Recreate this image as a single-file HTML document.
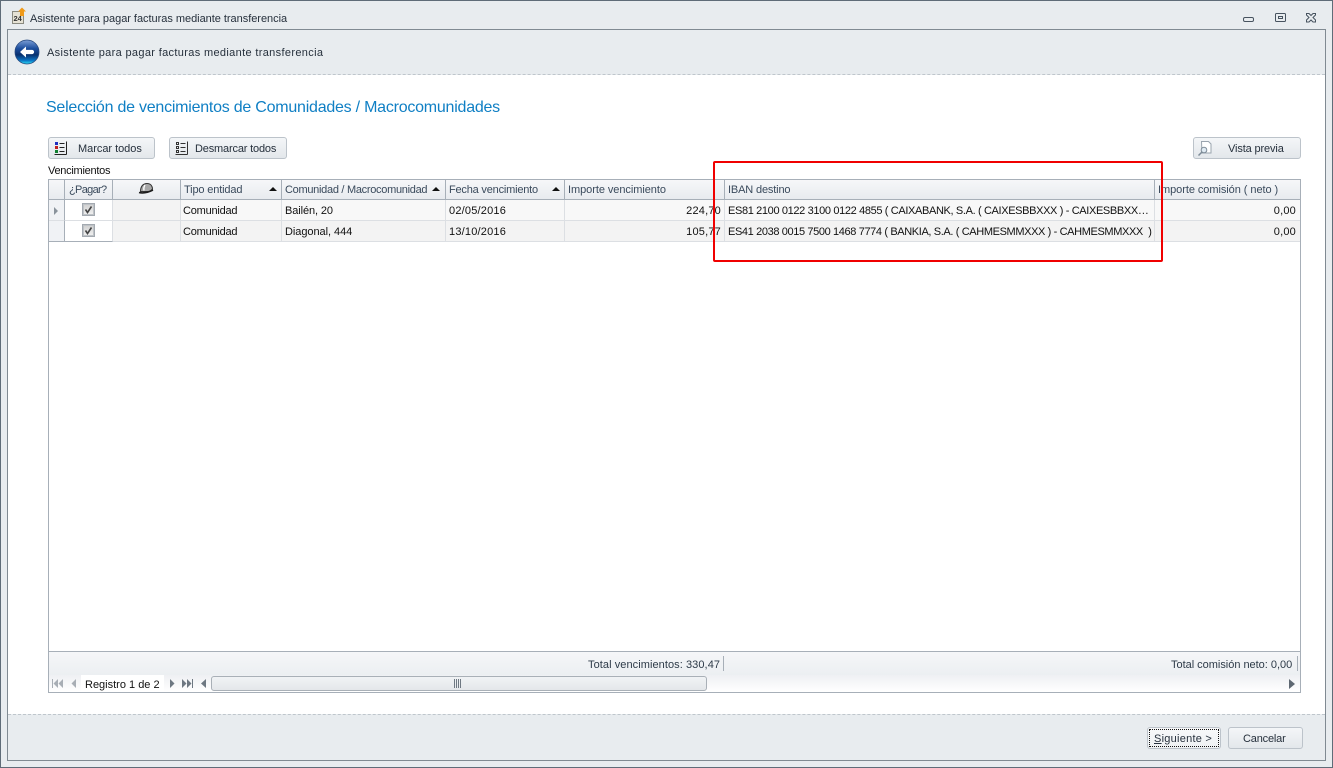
<!DOCTYPE html>
<html lang="es">
<head>
<meta charset="utf-8">
<title>Asistente para pagar facturas mediante transferencia</title>
<style>
html,body{margin:0;padding:0;background:#e8ecef;}
#w{position:relative;width:1333px;height:768px;overflow:hidden;background:#e8ecef;font-family:"Liberation Sans",sans-serif;font-size:11px;color:#1b2a3a;}
#w div,#w span.t{position:absolute;box-sizing:border-box;white-space:nowrap;}
.t{line-height:14px;}
.btn{border:1px solid #bcc3ca;border-radius:3px;background:linear-gradient(#f4f6f8,#e3e7eb);}
.h{top:180px;height:19px;background:linear-gradient(#f6f7f9,#e8ebef);border-right:1px solid #a7afb8;}
.ht{top:183px;color:#3a4a5c;}
.c{height:21px;border-right:1px solid #dcdfe3;border-bottom:1px solid #dcdfe3;background:#f3f3f3;}
.ct{color:#111;}
.r{text-align:right;}
.arr{width:0;height:0;border-left:4px solid transparent;border-right:4px solid transparent;border-bottom:4px solid #111;top:187px;}
.cb{width:13px;height:13px;border:1px solid #a3a9b0;box-shadow:inset 0 0 0 1px #bfc3c7;background:linear-gradient(#cfcfcf,#f2f2f2);}
</style>
</head>
<body>
<div id="w">
  <!-- outer frame -->
  <div style="left:0;top:0;width:1333px;height:768px;border:1px solid #5f6c78;"></div>
  <svg style="position:absolute;left:11px;top:7px" width="16" height="18" viewBox="0 0 16 18">
    <rect x="1.500" y="4.500" width="11" height="12" fill="#e6e2d4" stroke="#8a8a80"/>
    <text x="2.500" y="14" font-family="Liberation Sans" font-size="7.500" font-weight="bold" fill="#333">24</text>
    <path d="M9 9V4.500H7L11 .5l4 4h-2V9z" fill="#f09a18"/>
  </svg>
  <span class="t" style="left:30px;top:12px;letter-spacing:-.03px;color:#26303c">Asistente para pagar facturas mediante transferencia</span>

  <!-- window buttons -->
  <svg style="position:absolute;left:1240px;top:10px" width="80" height="16" viewBox="0 0 80 16" fill="none" stroke="#47535f">
    <rect x="3.500" y="7.500" width="10" height="4" rx="1.500"/>
    <rect x="35.500" y="3.500" width="10" height="8" rx="1"/>
    <rect x="38.500" y="6.500" width="4" height="2"/>
    <path d="M66.500 3.500h2.500l2 2 2-2h2.500v1.500l-2.500 2.500 2.500 2.500v2h-2.500l-2-2-2 2h-2.500v-2l2.500-2.500-2.500-2.500z"/>
  </svg>

  <!-- inner panel -->
  <div style="left:7px;top:29px;width:1319px;height:732px;border:1px solid #808a92;background:#e8ecef;"></div>
  <div style="left:8px;top:75px;width:1317px;height:639px;background:#fff;"></div>
  <div style="left:8px;top:74px;width:1317px;height:0;border-top:1px dashed #bfc6cc;"></div>
  <div style="left:8px;top:714px;width:1317px;height:0;border-top:1px dashed #bfc6cc;"></div>

  <!-- back icon -->
  <svg style="position:absolute;left:14px;top:39px" width="26" height="26" viewBox="0 0 26 26">
    <defs>
      <linearGradient id="bg" x1="0" y1="0" x2="0" y2="1">
        <stop offset="0" stop-color="#7c9fd6"/><stop offset=".35" stop-color="#1d4f9e"/><stop offset=".62" stop-color="#08306f"/><stop offset=".85" stop-color="#0a74c4"/><stop offset="1" stop-color="#2fe0f4"/>
      </linearGradient>
    </defs>
    <circle cx="13" cy="13" r="12" fill="url(#bg)" stroke="#27487e" stroke-width=".8"/>
    <path d="M6 13l6-5.500v3.400h6a2.100 2.100 0 0 1 0 4.200h-6v3.400z" fill="#fff"/>
  </svg>
  <span class="t" style="left:47px;top:46px;letter-spacing:.34px;color:#26303c">Asistente para pagar facturas mediante transferencia</span>

  <span class="t" style="left:46px;top:98px;font-size:16px;line-height:20px;color:#0f7fc4;letter-spacing:-.235px">Selección de vencimientos de Comunidades / Macrocomunidades</span>

  <!-- top buttons -->
  <div class="btn" style="left:48px;top:137px;width:107px;height:22px;"></div>
  <svg style="position:absolute;left:54px;top:141px" width="14" height="14" viewBox="0 0 14 14">
    <rect x="1" y="1" width="3" height="3" fill="#2030c0"/><rect x="1" y="5" width="3" height="3" fill="#c02020"/><rect x="1" y="9" width="3" height="3" fill="#108030"/>
    <path d="M5.500 2.500h5M5.500 6.500h5M5.500 10.500h5M12.500 .5v13M.5 13.500h12" stroke="#222" fill="none"/>
  </svg>
  <span class="t" style="left:78px;top:142px;letter-spacing:-.03px;color:#26303c">Marcar todos</span>

  <div class="btn" style="left:169px;top:137px;width:118px;height:22px;"></div>
  <svg style="position:absolute;left:175px;top:141px" width="14" height="14" viewBox="0 0 14 14" fill="none" stroke="#333">
    <rect x="1.500" y="1.500" width="2" height="2"/><rect x="1.500" y="5.500" width="2" height="2"/><rect x="1.500" y="9.500" width="2" height="2"/>
    <path d="M5.500 2.500h5M5.500 6.500h5M5.500 10.500h5M12.500 .5v13M.5 13.500h12"/>
  </svg>
  <span class="t" style="left:195px;top:142px;letter-spacing:-.17px;color:#26303c">Desmarcar todos</span>

  <div class="btn" style="left:1193px;top:137px;width:108px;height:22px;"></div>
  <svg style="position:absolute;left:1197px;top:140px" width="16" height="17" viewBox="0 0 16 17" fill="none">
    <path d="M4.500 1.500h7l2.500 2.500v9h-9z" fill="#fff" stroke="#9aa4ae"/>
    <circle cx="7" cy="10" r="2.800" fill="#dfeaf2" stroke="#7e8c98"/>
    <path d="M5 12l-3.500 3.500" stroke="#7e8c98" stroke-width="1.500"/>
  </svg>
  <span class="t" style="left:1228px;top:142px;letter-spacing:-.13px;color:#26303c">Vista previa</span>

  <span class="t" style="left:48px;top:164px;color:#111;letter-spacing:-.27px">Vencimientos</span>

  <!-- grid -->
  <div style="left:48px;top:179px;width:1253px;height:514px;border:1px solid #a7afb8;background:#fff;"></div>
  <div style="left:49px;top:199px;width:1251px;height:1px;background:#a7afb8;"></div>

  <div class="h" style="left:49px;width:16px;"></div>
  <div class="h" style="left:65px;width:48px;"></div>
  <div class="h" style="left:113px;width:68px;"></div>
  <div class="h" style="left:181px;width:101px;"></div>
  <div class="h" style="left:282px;width:164px;"></div>
  <div class="h" style="left:446px;width:119px;"></div>
  <div class="h" style="left:565px;width:160px;"></div>
  <div class="h" style="left:725px;width:430px;"></div>
  <div class="h" style="left:1155px;width:145px;border-right:0;"></div>

  <span class="t ht" style="left:69px;letter-spacing:-.67px">¿Pagar?</span>
  <svg style="position:absolute;left:138px;top:182px" width="16" height="13" viewBox="0 0 16 13">
    <path d="M2.500 9.500C2.500 4.500 5 1.500 9 1.500s5.500 3 5.500 5.500l-2.500 2.500z" fill="#a8a8a8" stroke="#333"/>
    <path d="M1 10.500C5 11.500 10 10.500 15 8" fill="none" stroke="#1c1c1c" stroke-width="1.600"/>
    <path d="M7 3C6 4.500 5.500 6 6 8.500" fill="none" stroke="#fff" stroke-width="1.400"/>
  </svg>
  <span class="t ht" style="left:184px;letter-spacing:-.15px">Tipo entidad</span>
  <div class="arr" style="left:269px"></div>
  <span class="t ht" style="left:285px;letter-spacing:-.29px">Comunidad / Macrocomunidad</span>
  <div class="arr" style="left:432px"></div>
  <span class="t ht" style="left:449px;letter-spacing:-.2px">Fecha vencimiento</span>
  <div class="arr" style="left:552px"></div>
  <span class="t ht" style="left:568px;letter-spacing:-.06px">Importe vencimiento</span>
  <span class="t ht" style="left:728px;letter-spacing:-.15px">IBAN destino</span>
  <span class="t ht" style="left:1158px;letter-spacing:-.06px">Importe comisión ( neto )</span>

  <!-- row cells -->
  <div class="c" style="left:49px;top:200px;width:16px;background:#f0f2f5;border-right-color:#a7afb8;"></div>
  <div class="c" style="left:49px;top:221px;width:16px;background:#f0f2f5;border-right-color:#a7afb8;border-bottom-color:#a7afb8;"></div>
  <div style="left:54px;top:207px;width:0;height:0;border-left:4px solid #8a939c;border-top:4px solid transparent;border-bottom:4px solid transparent;"></div>

  <div class="c" style="left:65px;top:200px;width:48px;background:#fff;"></div>
  <div class="c" style="left:65px;top:221px;width:48px;background:#fff;border-bottom-color:#a7afb8;"></div>
  <div class="c" style="left:113px;top:200px;width:68px;"></div>
  <div class="c" style="left:113px;top:221px;width:68px;"></div>
  <div class="c" style="left:181px;top:200px;width:101px;background:#f8f8f8;"></div>
  <div class="c" style="left:181px;top:221px;width:101px;"></div>
  <div class="c" style="left:282px;top:200px;width:164px;background:#f8f8f8;"></div>
  <div class="c" style="left:282px;top:221px;width:164px;"></div>
  <div class="c" style="left:446px;top:200px;width:119px;background:#f8f8f8;"></div>
  <div class="c" style="left:446px;top:221px;width:119px;"></div>
  <div class="c" style="left:565px;top:200px;width:160px;background:#f8f8f8;"></div>
  <div class="c" style="left:565px;top:221px;width:160px;"></div>
  <div class="c" style="left:725px;top:200px;width:430px;background:#f8f8f8;"></div>
  <div class="c" style="left:725px;top:221px;width:430px;"></div>
  <div class="c" style="left:1155px;top:200px;width:145px;background:#f8f8f8;border-right:0;"></div>
  <div class="c" style="left:1155px;top:221px;width:145px;border-right:0;"></div>

  <div class="cb" style="left:82px;top:203px;"></div>
  <div class="cb" style="left:82px;top:224px;"></div>
  <svg style="position:absolute;left:82px;top:203px" width="13" height="34" viewBox="0 0 13 34" fill="none" stroke="#444" stroke-width="1.600">
    <path d="M3.500 6.500l2 3 4-6M3.500 27.500l2 3 4-6"/>
  </svg>

  <span class="t ct" style="left:183px;top:204px;letter-spacing:-.22px">Comunidad</span>
  <span class="t ct" style="left:183px;top:225px;letter-spacing:-.22px">Comunidad</span>
  <span class="t ct" style="left:285px;top:204px;letter-spacing:-.1px">Bailén, 20</span>
  <span class="t ct" style="left:285px;top:225px;letter-spacing:-.05px">Diagonal, 444</span>
  <span class="t ct" style="left:449px;top:204px;letter-spacing:.2px">02/05/2016</span>
  <span class="t ct" style="left:449px;top:225px;letter-spacing:.2px">13/10/2016</span>
  <span class="t ct r" style="left:621px;width:100px;top:204px;letter-spacing:.2px">224,70</span>
  <span class="t ct r" style="left:621px;width:100px;top:225px;letter-spacing:.2px">105,77</span>
  <span class="t ct" style="left:728px;top:204px;letter-spacing:-.36px">ES81 2100 0122 3100 0122 4855 ( CAIXABANK, S.A. ( CAIXESBBXXX ) - CAIXESBBXX…</span>
  <span class="t ct" style="left:728px;top:225px;letter-spacing:-.375px">ES41 2038 0015 7500 1468 7774 ( BANKIA, S.A. ( CAHMESMMXXX ) - CAHMESMMXXX &nbsp;)</span>
  <span class="t ct r" style="left:1196px;width:100px;top:204px;letter-spacing:.2px">0,00</span>
  <span class="t ct r" style="left:1196px;width:100px;top:225px;letter-spacing:.2px">0,00</span>

  <!-- footer -->
  <div style="left:49px;top:651px;width:1251px;height:1px;background:#a7afb8;"></div>
  <div style="left:49px;top:652px;width:1251px;height:23px;background:linear-gradient(#f5f6f8,#eceff2);"></div>
  <div style="left:49px;top:675px;width:1251px;height:17px;background:linear-gradient(#eef0f3,#fff);"></div>
  <span class="t" style="left:588px;top:658px;color:#2d3a48;letter-spacing:.07px">Total vencimientos: 330,47</span>
  <div style="left:723px;top:656px;width:1px;height:15px;background:#a7afb8;"></div>
  <span class="t" style="left:1171px;top:658px;color:#2d3a48;letter-spacing:-.02px">Total comisión neto: 0,00</span>
  <div style="left:1297px;top:656px;width:1px;height:15px;background:#a7afb8;"></div>

  <div style="left:81px;top:675px;width:83px;height:17px;background:#fff;"></div>
  <span class="t" style="left:85px;top:678px;color:#111;">Registro 1 de 2</span>
  <svg style="position:absolute;left:50px;top:678px" width="160" height="12" viewBox="0 0 160 12">
    <g fill="#a8aeb5">
      <path d="M2 1h1v9H2zM8 1v9L3.500 5.500zM13 1v9L8.500 5.500z"/>
      <path d="M26 1v9l-4.500-4.500z"/>
    </g>
    <g fill="#6e7882">
      <path d="M120 1v9l4.500-4.500z"/>
      <path d="M132 1v9l4.500-4.500zM137 1v9l4.500-4.500zM142 1h1v9h-1z"/>
      <path d="M156 1v9l-5-4.500z"/>
    </g>
  </svg>
  <div style="left:211px;top:676px;width:496px;height:15px;border:1px solid #a9b0b7;border-radius:3px;background:linear-gradient(#f1f3f5,#e4e7ea);"></div>
  <svg style="position:absolute;left:454px;top:679px" width="10" height="9" viewBox="0 0 10 9" stroke="#6e7882" fill="none">
    <path d="M.5 0v9M2.500 0v9M4.500 0v9M6.500 0v9"/>
  </svg>
  <div style="left:1289px;top:679px;width:0;height:0;border-left:6px solid #5e6872;border-top:5px solid transparent;border-bottom:5px solid transparent;"></div>

  <!-- bottom buttons -->
  <div class="btn" style="left:1147px;top:727px;width:74px;height:22px;background:linear-gradient(#f8f9fa,#eef1f3);"></div>
  <div style="left:1149px;top:729px;width:70px;height:18px;border:1px dotted #111;"></div>
  <span class="t" style="left:1154px;top:732px;letter-spacing:.25px;color:#26303c"><u>S</u>iguiente &gt;</span>
  <div class="btn" style="left:1228px;top:727px;width:75px;height:22px;"></div>
  <span class="t" style="left:1243px;top:732px;letter-spacing:-.18px;color:#26303c">Cancelar</span>

  <!-- red annotation -->
  <div style="left:713px;top:161px;width:450px;height:101px;border:2px solid #f00000;border-radius:2px;"></div>
</div>
</body>
</html>
